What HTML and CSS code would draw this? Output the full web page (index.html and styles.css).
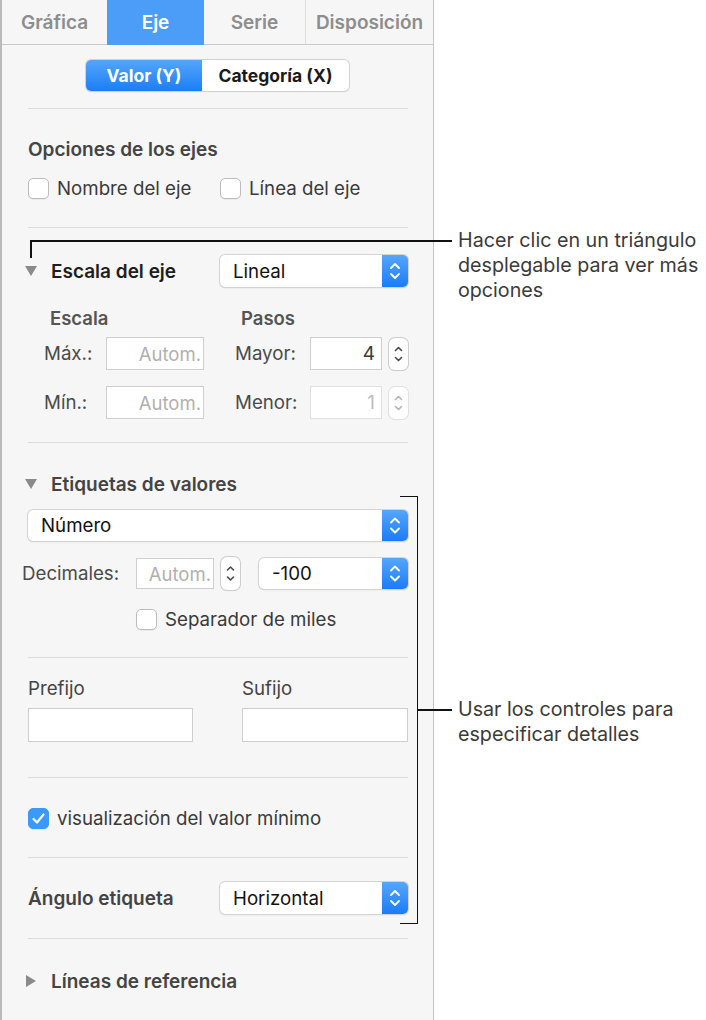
FILE: index.html
```html
<!DOCTYPE html>
<html lang="es">
<head>
  <meta charset="UTF-8" />
  <title>Eje</title>
  <link rel="stylesheet" href="styles.css">
</head>
<body>
<div class="page">

  <div class="panel">
    <div class="tabs">
      <div class="tab t1">Gráfica</div>
      <div class="tab t2 active">Eje</div>
      <div class="tab t3">Serie</div>
      <div class="tab t4">Disposición</div>
    </div>

    <div class="seg-wrap">
      <div class="seg">
        <div class="seg-btn on">Valor (Y)</div>
        <div class="seg-btn">Categoría (X)</div>
      </div>
    </div>

    <div class="sec s2">
      <div class="heading">Opciones de los ejes</div>
      <div class="row checks">
        <label class="check first"><span class="box"></span>Nombre del eje</label>
        <label class="check"><span class="box"></span>Línea del eje</label>
      </div>
    </div>

    <div class="sec s3">
      <div class="row head-row">
        <svg class="tri" width="12" height="10" viewBox="0 0 12 10"><polygon points="0,0 12,0 6,10" fill="#8a8a8a"/></svg>
        <span class="head-title dark">Escala del eje</span>
        <div class="popup w188">
          <span class="popup-text">Lineal</span>
          <span class="popup-arrows"><svg width="26" height="32" viewBox="0 0 26 32"><path d="M9 13 L13 9 L17 13 M9 19 L13 23 L17 19" fill="none" stroke="#fff" stroke-width="1.8" stroke-linecap="round" stroke-linejoin="round"/></svg></span>
        </div>
      </div>
      <div class="sub-heads">
        <span class="sub-head first">Escala</span>
        <span class="sub-head">Pasos</span>
      </div>
      <div class="scale-row">
        <span class="lbl l1">Máx.:</span>
        <span class="field f-auto ph">Autom.</span>
        <span class="lbl l2">Mayor:</span>
        <span class="field f-step">4</span>
        <span class="stepper"><svg width="19" height="32" viewBox="0 0 19 32"><path d="M6.5 12.5 L9.5 9.5 L12.5 12.5 M6.5 19.5 L9.5 22.5 L12.5 19.5" fill="none" stroke="#4a4a4a" stroke-width="1.6" stroke-linecap="round" stroke-linejoin="round"/></svg></span>
      </div>
      <div class="scale-row second">
        <span class="lbl l1">Mín.:</span>
        <span class="field f-auto ph">Autom.</span>
        <span class="lbl l2">Menor:</span>
        <span class="field f-step off">1</span>
        <span class="stepper off"><svg width="19" height="32" viewBox="0 0 19 32"><path d="M6.5 12.5 L9.5 9.5 L12.5 12.5 M6.5 19.5 L9.5 22.5 L12.5 19.5" fill="none" stroke="#b4b4b4" stroke-width="1.6" stroke-linecap="round" stroke-linejoin="round"/></svg></span>
      </div>
    </div>

    <div class="sec s4">
      <div class="row head-row small">
        <svg class="tri" width="12" height="10" viewBox="0 0 12 10"><polygon points="0,0 12,0 6,10" fill="#8a8a8a"/></svg>
        <span class="head-title">Etiquetas de valores</span>
      </div>
      <div class="popup wide">
        <span class="popup-text">Número</span>
        <span class="popup-arrows"><svg width="26" height="31" viewBox="0 0 26 31"><path d="M9 12.5 L13 8.5 L17 12.5 M9 18.5 L13 22.5 L17 18.5" fill="none" stroke="#fff" stroke-width="1.8" stroke-linecap="round" stroke-linejoin="round"/></svg></span>
      </div>
      <div class="row dec-row">
        <span class="lbl dec-lbl">Decimales:</span>
        <span class="field f-dec ph">Autom.</span>
        <span class="stepper tall"><svg width="19" height="33" viewBox="0 0 19 33"><path d="M6.5 13 L9.5 10 L12.5 13 M6.5 20 L9.5 23 L12.5 20" fill="none" stroke="#4a4a4a" stroke-width="1.6" stroke-linecap="round" stroke-linejoin="round"/></svg></span>
        <div class="popup w149">
          <span class="popup-text">-100</span>
          <span class="popup-arrows"><svg width="26" height="31" viewBox="0 0 26 31"><path d="M9 12.5 L13 8.5 L17 12.5 M9 18.5 L13 22.5 L17 18.5" fill="none" stroke="#fff" stroke-width="1.8" stroke-linecap="round" stroke-linejoin="round"/></svg></span>
        </div>
      </div>
      <label class="check sep-check"><span class="box"></span>Separador de miles</label>
    </div>

    <div class="sec s5">
      <div class="fix-cols">
        <div class="fix-col c1">
          <div class="fix-lbl">Prefijo</div>
          <div class="field f-fix"></div>
        </div>
        <div class="fix-col c2">
          <div class="fix-lbl">Sufijo</div>
          <div class="field f-fix"></div>
        </div>
      </div>
    </div>

    <div class="sec s6">
      <label class="check"><span class="box on"><svg width="21" height="21" viewBox="0 0 21 21"><path d="M5.5 11 L9 14.5 L15.5 6.5" fill="none" stroke="#fff" stroke-width="2.2" stroke-linecap="round" stroke-linejoin="round"/></svg></span>visualización del valor mínimo</label>
    </div>

    <div class="sec s7">
      <div class="row">
        <span class="head-title plain">Ángulo etiqueta</span>
        <div class="popup w188">
          <span class="popup-text">Horizontal</span>
          <span class="popup-arrows"><svg width="26" height="32" viewBox="0 0 26 32"><path d="M9 13 L13 9 L17 13 M9 19 L13 23 L17 19" fill="none" stroke="#fff" stroke-width="1.8" stroke-linecap="round" stroke-linejoin="round"/></svg></span>
        </div>
      </div>
    </div>

    <div class="sec s8">
      <div class="row head-row small">
        <svg class="tri" width="12" height="12" viewBox="0 0 12 12"><polygon points="1,0 11,6 1,12" fill="#8a8a8a"/></svg>
        <span class="head-title">Líneas de referencia</span>
      </div>
    </div>
  </div>

  <!-- callouts -->
  <div class="line h1"></div>
  <div class="line v1"></div>
  <div class="note n1">Hacer clic en un triángulo desplegable para ver más opciones</div>

  <div class="line bracket"></div>
  <div class="line h2"></div>
  <div class="note n2">Usar los controles para especificar detalles</div>

</div>
</body>
</html>
```

FILE: styles.css
```css
* { box-sizing: border-box; }
body { margin: 0; background: #fff; font-family: Inter, "Liberation Sans", sans-serif; color: #3a3a3a; }
.page { position: relative; width: 706px; height: 1020px; overflow: hidden; }

.panel { width: 434px; height: 1020px; background: #f6f6f6; border-left: 2px solid #b9b9b9; border-right: 1px solid #c6c6c6; }

.tabs { display: flex; height: 45px; }
.tab { height: 45px; border-bottom: 1px solid #c9c9c9; display: flex; align-items: center; justify-content: center; font-size: 19px; font-weight: 600; color: #8d8d8d; }
.tab.t1 { width: 105px; }
.tab.t2 { width: 97px; }
.tab.t3 { width: 102px; border-right: 1px solid #dedede; }
.tab.t4 { width: 127px; }
.tab.active { background: #4b9df8; color: #fff; border-bottom-color: #4b9df8; }

.seg-wrap { height: 63px; padding: 15px 0 0 84px; }
.seg { display: flex; height: 31px; width: 263px; border-radius: 5px; background: #fff; box-shadow: 0 0 0 1px #d2d2d2, 0 1px 1px rgba(0,0,0,0.12); }
.seg-btn { display: flex; align-items: center; justify-content: center; font-size: 17.5px; font-weight: 700; color: #1a1a1a; width: 147px; }
.seg-btn.on { width: 116px; color: #fff; background: linear-gradient(#54a6fb, #1b7ef6); border-radius: 5px 0 0 5px; }

.sec { margin: 0 25px 0 26px; border-top: 1px solid #dcdcdc; }
.s2 { height: 119px; padding-top: 30px; }
.s3 { height: 215px; padding-top: 27px; }
.s4 { height: 215px; padding-top: 30px; }
.s5 { height: 120px; padding-top: 21px; }
.s6 { height: 80px; padding-top: 29px; }
.s7 { height: 81px; padding-top: 24px; }
.s8 { padding-top: 31px; }

.row { display: flex; align-items: center; }
.heading { height: 22px; line-height: 22px; font-size: 19px; font-weight: 600; color: #444; }
.checks { margin-top: 16px; }

.check { display: flex; align-items: center; height: 22px; font-size: 18.7px; color: #3a3a3a; }
.check.first { width: 192px; }
.box { width: 21px; height: 21px; margin-right: 8px; background: #fff; border: 1px solid #bcbcbc; border-radius: 5px; box-shadow: 0 1px 1px rgba(0,0,0,0.06); flex: none; }
.box.on { background: #3b99fc; border-color: #3b99fc; position: relative; }
.box.on svg { position: absolute; left: -1px; top: -1px; }

.head-row { height: 32px; }
.head-row.small { height: 22px; }
.tri { margin-left: -3px; flex: none; }
.head-title { margin-left: 14px; font-size: 19px; font-weight: 600; color: #444; }
.head-title.dark { color: #1e1e1e; }
.head-title.plain { margin-left: 0; }

.popup { display: flex; height: 32px; background: #fff; border-radius: 5px; box-shadow: 0 0 0 1px #d3d3d3, 0 1px 1.5px rgba(0,0,0,0.15); margin-left: auto; }
.popup-text { flex: 1; display: flex; align-items: center; padding-left: 13px; font-size: 18.7px; color: #111; }
.popup-arrows { width: 26px; flex: none; background: linear-gradient(#55a7fb, #1a7cf6); border-radius: 0 5px 5px 0; display: flex; }
.popup.w188 { width: 188px; }
.popup.w149 { width: 149px; height: 31px; }
.popup.wide { width: 380px; height: 31px; margin-top: 15px; }

.sub-heads { display: flex; height: 20px; margin-top: 21px; padding-left: 22px; align-items: center; }
.sub-head { font-size: 18.5px; font-weight: 600; color: #555; }
.sub-head.first { width: 191px; }

.scale-row { display: flex; align-items: center; height: 33px; margin-top: 9px; padding-left: 16px; }
.scale-row.second { margin-top: 16px; }
.lbl { font-size: 18.7px; color: #4a4a4a; }
.lbl.l1 { width: 62px; }
.lbl.l2 { width: 75px; margin-left: 31px; }

.field { height: 33px; background: #fff; border: 1px solid #cfcfcf; display: flex; align-items: center; justify-content: flex-end; padding-right: 6px; font-size: 19px; color: #3a3a3a; }
.field.ph { color: #b0b0b0; font-size: 18.5px; padding-right: 2px; }
.f-auto { width: 98px; }
.f-step { width: 72px; }
.f-step.off { color: #bdbdbd; border-color: #e0e0e0; }
.stepper { width: 19px; height: 32px; margin-left: 7px; background: #fff; border-radius: 6px; box-shadow: 0 0 0 1px #cdcdcd, 0 1px 1px rgba(0,0,0,0.1); display: flex; }
.stepper.off { box-shadow: 0 0 0 1px #e0e0e0; }
.stepper.tall { height: 33px; }

.dec-row { height: 33px; margin-top: 16px; margin-left: -6px; }
.dec-lbl { width: 114px; }
.f-dec { width: 78px; height: 31px; }
.dec-row .popup { margin-left: 19px; }

.sep-check { margin-top: 18px; margin-left: 108px; }

.fix-cols { display: flex; }
.fix-col.c1 { width: 214px; }
.fix-col.c2 { width: 166px; }
.fix-lbl { height: 20px; line-height: 20px; font-size: 18.7px; color: #444; }
.f-fix { height: 34px; margin-top: 9px; }
.c1 .f-fix { width: 165px; }
.c2 .f-fix { width: 166px; }

/* callout lines */
.line { position: absolute; background: #111; }
.h1 { left: 30px; top: 240px; width: 422px; height: 1.5px; }
.v1 { left: 30px; top: 240px; width: 1.5px; height: 18px; }
.bracket { left: 400px; top: 496px; width: 18px; height: 428px; background: none; border: 1.5px solid #111; border-left: none; }
.h2 { left: 417px; top: 709px; width: 35px; height: 1.5px; }

.note { position: absolute; left: 458px; font-size: 19.7px; line-height: 25px; color: #3a3a3a; }
.n1 { top: 228px; width: 248px; }
.n2 { top: 697px; width: 240px; }
```
